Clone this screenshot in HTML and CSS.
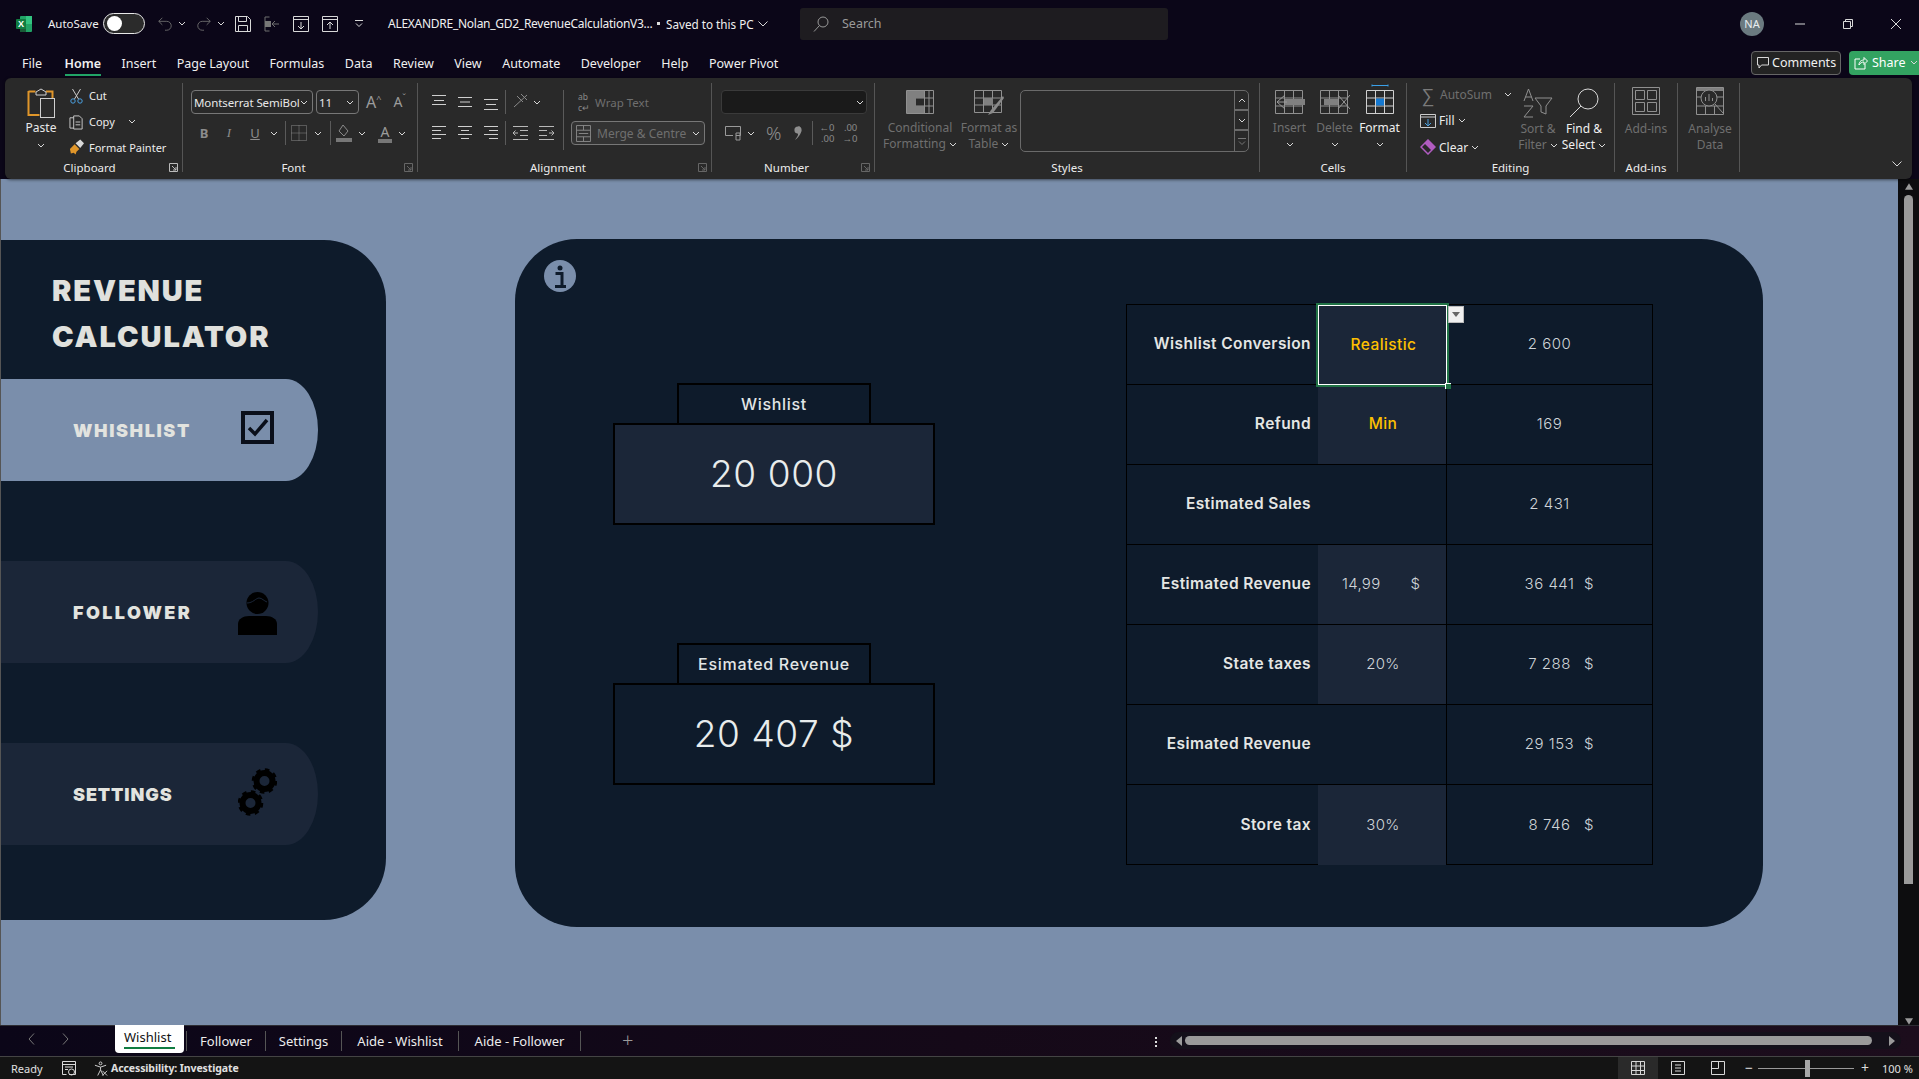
FILE: index.html
```html
<!DOCTYPE html>
<html lang="en">
<head>
<meta charset="utf-8">
<title>Revenue Calculator</title>
<link rel="stylesheet" href="styles.css">
</head>
<body>
<div class="window">
  <header class="titlebar">
    <svg class="logo" viewBox="0 0 16 16"><rect x="4" y="0" width="12" height="16" rx="1" fill="#21a366"/><rect x="10" y="0" width="6" height="8" fill="#33c481"/><rect x="4" y="8" width="6" height="8" fill="#185c37"/><rect x="0" y="3" width="10" height="10" rx="1" fill="#107c41"/><text x="5" y="11" class="logo-x">X</text></svg>
    <span class="autosave">AutoSave</span>
    <span class="toggle"><span class="knob"></span></span>
    <svg class="qa q-undo dim" viewBox="0 0 16 18"><path d="M1 6h9a5 5 0 0 1 0 10H8M1 6l4-4M1 6l4 4"/></svg>
    <svg class="chev q-c1 dimc" viewBox="0 0 8 5"><path d="M1 1l3 3 3-3"/></svg>
    <svg class="qa q-redo dim" viewBox="0 0 16 18"><path d="M15 6H6a5 5 0 0 0 0 10h2M15 6l-4-4M15 6l-4 4"/></svg>
    <svg class="chev q-c1 dimc" viewBox="0 0 8 5"><path d="M1 1l3 3 3-3"/></svg>
    <svg class="qa q-save" viewBox="0 0 16 16"><path d="M.5.500h12l3 3v12H.5zM3.500.5v5h8v-5M3.500 15.500v-6h9v6"/></svg>
    <svg class="qa q-imp dim" viewBox="0 0 16 16"><path d="M5.500 1H1v14h4.500M15 8H8M11 5L8 8l3 3"/><rect x="1" y="5" width="6" height="6" fill="#777" stroke="none"/></svg>
    <svg class="qa q-box" viewBox="0 0 16 16"><path d="M.5.500h15v15H.5zM.5 3.500h15M8 6v7M5 10l3 3 3-3"/></svg>
    <svg class="qa q-box2" viewBox="0 0 16 16"><path d="M.5.500h15v15H.5zM.5 3.500h15M8 13V6M5 9l3-3 3 3"/></svg>
    <svg class="q-cust" viewBox="0 0 8 7"><path d="M0 .5h8M1 3.500l3 3 3-3"/></svg>
    <span class="doc">ALEXANDRE_Nolan_GD2_RevenueCalculationV3...</span>
    <span class="dot"></span>
    <span class="saved">Saved to this PC</span>
    <svg class="doc-chev" viewBox="0 0 10 6"><path d="M.5.500L5 5 9.500.5"/></svg>
    <div class="search">
      <svg class="search-ic" viewBox="0 0 16 16"><circle cx="10" cy="6" r="5"/><path d="M6.500 9.500L1 15.500"/></svg>
      <span>Search</span>
    </div>
    <span class="avatar">NA</span>
    <svg class="win win-min" viewBox="0 0 10 10"><path d="M0 5h10"/></svg>
    <svg class="win win-max" viewBox="0 0 10 10"><path d="M.5 2.500h7v7h-7zM2.500 2.500v-2h7v7h-2"/></svg>
    <svg class="win win-close" viewBox="0 0 10 10"><path d="M0 0l10 10M10 0L0 10"/></svg>
  </header>

  <nav class="tabsrow">
    <span class="tab-file">File</span><span class="tab-on">Home</span><span>Insert</span><span>Page Layout</span><span>Formulas</span><span>Data</span><span>Review</span><span>View</span><span>Automate</span><span>Developer</span><span>Help</span><span>Power Pivot</span>
    <div class="actions">
      <span class="comments"><svg class="cm-ic" viewBox="0 0 12 12"><path d="M.5.500h11v7.500H4.500L2 11V8H.5z"/></svg>Comments</span>
      <span class="share"><svg class="sh-ic" viewBox="0 0 14 14"><path d="M6 3H1v10h10V8M5 9c0-4 3-5 5-5V1.500L13.500 5 10 8.500V6C8 6 6 7 5 9z"/></svg>Share<svg class="chev sh-c" viewBox="0 0 8 5"><path d="M1 1l3 3 3-3"/></svg></span>
    </div>
  </nav>

  <section class="ribbon">
    <div class="grp g-clip">
      <div class="body clipbody">
        <div class="paste">
          <svg class="paste-ic" viewBox="0 0 28 30"><path d="M1.500 3.500h7M19 3.500h6.500V10M1.500 3v24h11" fill="none" stroke="#e0962a" stroke-width="2"/><path d="M9 4l5-3 5 3v3H9z" fill="none" stroke="#cfcfcf"/><rect x="13.500" y="10.500" width="14" height="19" fill="#2a2a2a" stroke="#cfcfcf"/></svg>
          <span class="txt">Paste</span>
          <svg class="chev" viewBox="0 0 8 5"><path d="M1 1l3 3 3-3"/></svg>
        </div>
        <div class="clipcol">
          <div class="crow"><svg class="cic" viewBox="0 0 14 16"><path d="M3 1l6 10M11 1L5 11" stroke="#ccc" fill="none"/><circle cx="3.500" cy="13" r="2.200" fill="none" stroke="#4aa0e0"/><circle cx="10.500" cy="13" r="2.200" fill="none" stroke="#4aa0e0"/></svg><span>Cut</span></div>
          <div class="crow"><svg class="cic" viewBox="0 0 16 16"><path d="M5 3.500H1v11h4M5 1.500h6l3 3v11H5zM7 8h5M7 11h5" stroke="#ccc" fill="none"/></svg><span>Copy</span><svg class="chev copy-c" viewBox="0 0 8 5"><path d="M1 1l3 3 3-3"/></svg></div>
          <div class="crow"><svg class="cic" viewBox="0 0 16 16"><path d="M1 10l5-5 5 5-3 3-1 3-2-2-3 1z" fill="#e0962a"/><path d="M7 4l5-4 4 4-4 5z" fill="#d8d8d8"/></svg><span>Format Painter</span></div>
        </div>
      </div>
      <div class="glabel lab-clip">Clipboard</div>
      <svg class="launch" viewBox="0 0 9 9"><path d="M.5 8.500v-8h8v8zM3 3l4 4M7 4v3H4"/></svg>
    </div>

    <div class="grp g-font">
      <div class="body rows">
        <div class="row">
          <span class="combo font-combo"><span>Montserrat SemiBol</span><svg class="chev" viewBox="0 0 8 5"><path d="M1 1l3 3 3-3"/></svg></span>
          <span class="combo size-combo"><span>11</span><svg class="chev" viewBox="0 0 8 5"><path d="M1 1l3 3 3-3"/></svg></span>
          <span class="glyph big-a">A<sup>^</sup></span>
          <span class="glyph small-a">A<sup>ˇ</sup></span>
        </div>
        <div class="row">
          <span class="fx f-b">B</span>
          <span class="fx f-i">I</span>
          <span class="fx f-u">U</span>
          <svg class="chev f-c dimc" viewBox="0 0 8 5"><path d="M1 1l3 3 3-3"/></svg>
          <i class="vsep vs-1"></i>
          <svg class="ric" viewBox="0 0 16 16"><path d="M.5.500h15v15H.5zM8 .5v15M.5 8h15" stroke-dasharray="1 1"/></svg>
          <svg class="chev f-c2 dimc" viewBox="0 0 8 5"><path d="M1 1l3 3 3-3"/></svg>
          <i class="vsep vs-2"></i>
          <svg class="ric fill-ic" viewBox="0 0 16 18"><path d="M7 1l5 6-4 5-5-5z"/><rect y="14" width="16" height="4" fill="#777" stroke="none"/></svg>
          <svg class="chev f-c3 dimc" viewBox="0 0 8 5"><path d="M1 1l3 3 3-3"/></svg>
          <span class="color-a">A</span>
          <svg class="chev f-c3 dimc" viewBox="0 0 8 5"><path d="M1 1l3 3 3-3"/></svg>
        </div>
      </div>
      <div class="glabel lab-launch">Font</div>
      <svg class="launch dimlaunch" viewBox="0 0 9 9"><path d="M.5 8.500v-8h8v8zM3 3l4 4M7 4v3H4"/></svg>
    </div>

    <div class="grp g-align">
      <div class="body alignbody">
        <div class="rows align-l">
          <div class="row">
            <svg class="al" viewBox="0 0 14 16"><path d="M0 1.500h14M2 6.500h10M0 10.500h14"/></svg>
            <svg class="al al-g" viewBox="0 0 14 16"><path d="M0 3.500h14M2 8h10M0 12.500h14"/></svg>
            <svg class="al al-g" viewBox="0 0 14 16"><path d="M0 5.500h14M2 10.500h10M0 15.500h14"/></svg>
            <i class="vsep vs-a"></i>
            <svg class="ric orient" viewBox="0 0 16 18"><path d="M1 14L14 2M4 3l6 6M8 1l6 6"/></svg>
            <svg class="chev or-c dimc" viewBox="0 0 8 5"><path d="M1 1l3 3 3-3"/></svg>
          </div>
          <div class="row">
            <svg class="al" viewBox="0 0 14 16"><path d="M0 1.500h14M0 5.500h9M0 9.500h14M0 13.500h9"/></svg>
            <svg class="al al-g" viewBox="0 0 14 16"><path d="M0 1.500h14M3 5.500h8M0 9.500h14M3 13.500h8"/></svg>
            <svg class="al al-g" viewBox="0 0 14 16"><path d="M0 1.500h14M5 5.500h9M0 9.500h14M5 13.500h9"/></svg>
            <i class="vsep vs-a"></i>
            <svg class="ind" viewBox="0 0 15 16"><path d="M0 1.500h15M0 14.500h15M7 5.500h8M7 10.500h8M5 8H0M2.500 5.500L0 8l2.500 2.500" /></svg>
            <svg class="ind ind2" viewBox="0 0 15 16"><path d="M0 1.500h15M0 14.500h15M0 5.500h8M0 10.500h8M10 8h5M12.500 5.500L15 8l-2.500 2.500"/></svg>
          </div>
        </div>
        <i class="vsep vs-wrap"></i>
        <div class="rows align-r">
          <div class="row wrap">
            <span class="wrapab">ab<br>c↵</span><span>Wrap Text</span>
          </div>
          <div class="row">
            <span class="merge"><svg class="merge-ic" viewBox="0 0 16 18"><path d="M.5.500h15v17H.5zM.5 5.500h15M.5 12.500h15M8 .5v5M8 12.500v5M3 9h10"/></svg><span>Merge &amp; Centre</span><svg class="chev merge-c" viewBox="0 0 8 5"><path d="M1 1l3 3 3-3"/></svg></span>
          </div>
        </div>
      </div>
      <div class="glabel lab-launch">Alignment</div>
      <svg class="launch dimlaunch" viewBox="0 0 9 9"><path d="M.5 8.500v-8h8v8zM3 3l4 4M7 4v3H4"/></svg>
    </div>

    <div class="grp g-num">
      <div class="body rows">
        <div class="row"><span class="numcombo"><svg class="chev dimc" viewBox="0 0 8 5"><path d="M1 1l3 3 3-3"/></svg></span></div>
        <div class="row">
          <svg class="ric num-ic" viewBox="0 0 16 16"><path d="M.5 1.500h15v9H11M.5 1.500v9H8M11 8h4v7h-4z"/></svg>
          <svg class="chev n-c" viewBox="0 0 8 5"><path d="M1 1l3 3 3-3"/></svg>
          <span class="pct">%</span>
          <svg class="comma" viewBox="0 0 8 15"><circle cx="4" cy="4" r="3.600"/><path d="M4.500 0C8 1 8 7 5 10c-1 1-2 3-4 4 1-2 2.500-3 3-5 .2-1-.5-2-.5-2z"/></svg>
          <i class="vsep vs-n"></i>
          <span class="dec">←0<br>.00</span>
          <span class="dec dec2">.00<br>→0</span>
        </div>
      </div>
      <div class="glabel lab-launch">Number</div>
      <svg class="launch dimlaunch" viewBox="0 0 9 9"><path d="M.5 8.500v-8h8v8zM3 3l4 4M7 4v3H4"/></svg>
    </div>

    <div class="grp g-styles">
      <div class="body stylesbody">
        <div class="big big-cf">
          <svg class="bigic" viewBox="0 0 28 24"><path d="M.5.500h27v23H.5zM.5 8h27M.5 16h27M9.500.5v23M18.500.5v23M23 .5v23"/><path d="M1 1h17v7H10v8h8v7H1z" fill="#808080" stroke="none"/></svg>
          <span>Conditional</span><span>Formatting <svg class="chev inl dimc" viewBox="0 0 8 5"><path d="M1 1l3 3 3-3"/></svg></span>
        </div>
        <div class="big big-ft">
          <svg class="bigic" viewBox="0 0 30 26"><path d="M.5.500h27v22H.5zM.5 8h27M.5 15h27M9.500.5v22M18.500.5v22"/><path d="M10 8h9v7h-9z" fill="#808080" stroke="none"/><path d="M29 6L17 20l-3 5 5-2L30 8z" fill="#8a8a8a" stroke="none"/></svg>
          <span>Format as</span><span>Table <svg class="chev inl dimc" viewBox="0 0 8 5"><path d="M1 1l3 3 3-3"/></svg></span>
        </div>
        <div class="gallery">
          <div class="gal-main"></div>
          <div class="gal-side">
            <span><svg class="chev dimc" viewBox="0 0 8 5"><path d="M1 4l3-3 3 3"/></svg></span>
            <span><svg class="chev dimc" viewBox="0 0 8 5"><path d="M1 1l3 3 3-3"/></svg></span>
            <span><svg class="q-gal" viewBox="0 0 8 7"><path d="M0 .5h8M1 3.500l3 3 3-3"/></svg></span>
          </div>
        </div>
      </div>
      <div class="glabel">Styles</div>
    </div>

    <div class="grp g-cells">
      <div class="body cellsbody">
        <div class="big big-cell">
          <svg class="bigic" viewBox="0 0 30 24"><path d="M.5.500h27v23H.5zM.5 8h27M.5 16h27M9.500.5v23M18.500.5v23"/><path d="M10 9h20v6H10z" fill="#808080" stroke="none"/><path d="M10 5l-8 7 8 7M2 12h10" stroke="#999"/></svg>
          <span>Insert</span><svg class="chev dimc" viewBox="0 0 8 5"><path d="M1 1l3 3 3-3"/></svg>
        </div>
        <div class="big big-cell">
          <svg class="bigic" viewBox="0 0 30 24"><path d="M.5.500h27v23H.5zM.5 8h27M.5 16h27M9.500.5v23M18.500.5v23"/><path d="M4 9h14v6H4z" fill="#808080" stroke="none"/><path d="M18 5l12 14M30 5L18 19" stroke="#999"/></svg>
          <span>Delete</span><svg class="chev dimc" viewBox="0 0 8 5"><path d="M1 1l3 3 3-3"/></svg>
        </div>
        <div class="big big-cell on">
          <svg class="bigic fmt-ic" viewBox="0 0 28 30"><path d="M6 1.500h16M6 .5v2M22 .5v2" stroke="#3aa0e8"/><path d="M.5 6.500h27v23H.5zM.5 14h27M.5 22h27M9.500 6.500v23M18.500 6.500v23" stroke="#d0d0d0"/><path d="M10 14.500h8v7h-8z" fill="#1478d0" stroke="none"/></svg>
          <span>Format</span><svg class="chev" viewBox="0 0 8 5"><path d="M1 1l3 3 3-3"/></svg>
        </div>
      </div>
      <div class="glabel">Cells</div>
    </div>

    <div class="grp g-edit">
      <div class="body editbody">
        <div class="editcol">
          <div class="erow off"><span class="sigma">∑</span><span>AutoSum</span><svg class="chev auto-c" viewBox="0 0 8 5"><path d="M1 1l3 3 3-3"/></svg></div>
          <div class="erow"><svg class="eic" viewBox="0 0 16 14"><path d="M.5.500h15v13H.5zM.5 3h15" fill="none" stroke="#ccc"/><path d="M8 5v7M5 9l3 3 3-3" fill="none" stroke="#4aa0e0"/></svg><span>Fill</span><svg class="chev" viewBox="0 0 8 5"><path d="M1 1l3 3 3-3"/></svg></div>
          <div class="erow"><svg class="eic" viewBox="0 0 16 16"><path d="M8 1l7 7-7 7-7-7z" fill="none" stroke="#b05cc0" stroke-width="1.500"/><path d="M4.500 4.500L8 1l7 7-3.500 3.500z" fill="#b05cc0"/></svg><span>Clear</span><svg class="chev" viewBox="0 0 8 5"><path d="M1 1l3 3 3-3"/></svg></div>
        </div>
        <div class="big big-sort">
          <svg class="bigic sort-ic" viewBox="0 0 30 30"><path d="M1 13L5.500 1 10 13M2.500 9h6M1 18h9L1 29h9M12 10h17l-6 8v8l-5-2v-6z"/></svg>
          <span>Sort &amp;</span><span>Filter <svg class="chev inl dimc" viewBox="0 0 8 5"><path d="M1 1l3 3 3-3"/></svg></span>
        </div>
        <div class="big big-find on">
          <svg class="bigic find-ic" viewBox="0 0 30 30"><circle cx="19" cy="11" r="10"/><path d="M12 18L1 29"/></svg>
          <span>Find &amp;</span><span>Select <svg class="chev inl" viewBox="0 0 8 5"><path d="M1 1l3 3 3-3"/></svg></span>
        </div>
      </div>
      <div class="glabel">Editing</div>
    </div>

    <div class="grp g-add">
      <div class="body cellsbody">
        <div class="big big-add">
          <svg class="bigic add-ic" viewBox="0 0 28 28"><path d="M.5.500h27v27H.5zM3.500 3.500h9v9h-9zM15.500 3.500h9v9h-9zM3.500 15.500h9v9h-9zM15.500 15.500h9v9h-9z"/></svg>
          <span>Add-ins</span>
        </div>
      </div>
      <div class="glabel">Add-ins</div>
    </div>

    <div class="grp g-data">
      <div class="body cellsbody">
        <div class="big big-add big-an">
          <svg class="bigic add-ic" viewBox="0 0 28 28"><path d="M.5.500h27v27H.5zM.5 10h27M.5 19h27M9.500 19v8M18.500 19v8"/><path d="M1 1h26v3H1z" fill="#808080" stroke="none"/><circle cx="13" cy="11" r="8" fill="#2a2a2a"/><path d="M19 17l8 9M9.500 14V10M13 14V7M16.500 14v-3"/></svg>
          <span>Analyse</span><span>Data</span>
        </div>
      </div>
      <div class="glabel hidden">.</div>
    </div>
    <svg class="collapse" viewBox="0 0 10 6"><path d="M.5.500L5 5 9.500.5"/></svg>
  </section>

  <main class="sheetwrap">
    <div class="sheet">
      <aside class="side">
        <h1 class="side-title">REVENUE<br>CALCULATOR</h1>
        <a class="navbtn nav-on"><span class="t-wish">WHISHLIST</span>
          <svg class="nav-ic" viewBox="0 0 33 33"><rect x="2" y="2" width="29" height="29" fill="none" stroke="#0a0f1a" stroke-width="4"/><path d="M8 17l6 6L26 9" fill="none" stroke="#0a0f1a" stroke-width="3.500"/></svg>
        </a>
        <a class="navbtn"><span class="t-foll">FOLLOWER</span>
          <svg class="nav-ic user-ic" viewBox="0 0 39 43"><circle cx="19.500" cy="11" r="11"/><path d="M0 43V32c0-5 5-8 11-8h17c6 0 11 3 11 8v11z"/><path d="M9 11c6 0 9-5 12-5s5 3 8 4" fill="none" stroke="#1b2638" stroke-width="1"/></svg>
        </a>
        <a class="navbtn"><span class="t-set">SETTINGS</span>
          <svg class="nav-ic gear-ic" viewBox="0 0 39 48"><g fill="none" stroke="#000"><circle cx="26.500" cy="13" r="8" stroke-width="6"/><circle cx="26.500" cy="13" r="11.300" stroke-width="3" stroke-dasharray="4.500 4.380"/><circle cx="12.500" cy="35" r="8" stroke-width="6"/><circle cx="12.500" cy="35" r="11.300" stroke-width="3" stroke-dasharray="4.500 4.380"/></g></svg>
        </a>
      </aside>

      <section class="panel">
        <svg class="info" viewBox="0 0 32 32"><circle cx="16" cy="16" r="16" fill="#7a8eab"/><circle cx="16" cy="8" r="2.500" fill="#0e1b2b"/><path d="M11.500 13.500h6.500v12M11 26.500h11" fill="none" stroke="#0e1b2b" stroke-width="3"/></svg>
        <div class="kpis">
          <div class="kpi">
            <div class="kpi-label">Wishlist</div>
            <div class="kpi-val filled">20 000</div>
          </div>
          <div class="kpi">
            <div class="kpi-label">Esimated Revenue</div>
            <div class="kpi-val">20 407 $</div>
          </div>
        </div>
        <div class="tbl">
          <div class="lab">Wishlist Conversion</div>
          <div class="inp sel yel">Realistic<span class="handle"></span><span class="dd"><svg viewBox="0 0 8 5"><path d="M0 0h8L4 5z"/></svg></span></div>
          <div class="val"><span class="n">2 600</span></div>

          <div class="lab">Refund</div>
          <div class="inp yel">Min</div>
          <div class="val"><span class="n">169</span></div>

          <div class="lab">Estimated Sales</div>
          <div class="blank"></div>
          <div class="val"><span class="n">2 431</span></div>

          <div class="lab">Estimated Revenue</div>
          <div class="inp price"><span>14,99</span><span>$</span></div>
          <div class="val"><span class="n">36 441</span><span class="usd">$</span></div>

          <div class="lab">State taxes</div>
          <div class="inp">20%</div>
          <div class="val"><span class="n">7 288</span><span class="usd">$</span></div>

          <div class="lab">Esimated Revenue</div>
          <div class="blank"></div>
          <div class="val"><span class="n">29 153</span><span class="usd">$</span></div>

          <div class="lab">Store tax</div>
          <div class="inp">30%</div>
          <div class="val"><span class="n">8 746</span><span class="usd">$</span></div>
        </div>
      </section>
    </div>
    <div class="vscroll">
      <svg class="arr" viewBox="0 0 10 8"><path d="M5 0l5 8H0z"/></svg>
      <div class="vthumb"></div>
      <svg class="arr" viewBox="0 0 10 8"><path d="M0 0h10L5 8z"/></svg>
    </div>
  </main>

  <footer class="sheetbar">
    <div class="sheetnav">
      <svg class="sn" viewBox="0 0 7 12"><path d="M6 .5L1 6l5 5.500"/></svg>
      <svg class="sn sn2" viewBox="0 0 7 12"><path d="M1 .5L6 6l-5 5.500"/></svg>
    </div>
    <span class="stab active">Wishlist</span>
    <span class="stab st-f">Follower</span>
    <span class="stab st-s">Settings</span>
    <span class="stab st-aw">Aide - Wishlist</span>
    <span class="stab st-af">Aide - Follower</span>
    <span class="plus">+</span>
    <span class="kebab"><i></i><i></i><i></i></span>
    <div class="htrack">
      <svg class="harr" viewBox="0 0 6 10"><path d="M6 0v10L0 5z"/></svg>
      <div class="hthumb"></div>
      <svg class="harr" viewBox="0 0 6 10"><path d="M0 0v10l6-5z"/></svg>
    </div>
  </footer>

  <footer class="status">
    <span class="ready">Ready</span>
    <svg class="st-ic macro" viewBox="0 0 14 15"><path d="M.5.500h13v13H7M.5.500v13h4M.5 3.500h13M3 6h8M3 8.500h3"/><circle cx="9.500" cy="11" r="3"/></svg>
    <svg class="st-ic acc" viewBox="0 0 15 15"><circle cx="7" cy="2" r="1.500"/><path d="M1 4l6 2 6-2M7 6v3M4 15l3-6 3 6M9 10l5 5M14 10l-5 5"/></svg>
    <span class="acc-t">Accessibility: Investigate</span>
    <div class="st-right">
      <span class="vw vw-on"><svg class="st-ic" viewBox="0 0 14 14"><path d="M.5.500h13v13H.5zM.5 5h13M.5 9.500h13M5 .5v13M9.500.5v13"/></svg></span>
      <span class="vw"><svg class="st-ic" viewBox="0 0 14 14"><path d="M.5.500h13v13H.5zM4 4h6M4 7h6M4 10h6"/></svg></span>
      <span class="vw"><svg class="st-ic" viewBox="0 0 14 14"><path d="M.5.500h13v13H.5zM7.500.5v7h-7"/></svg></span>
      <span class="zm zm-m">−</span>
      <span class="slider"><i></i></span>
      <span class="zm">+</span>
      <span class="zoom">100 %</span>
    </div>
  </footer>
</div>
</body>
</html>
```

FILE: styles.css
```css
*{box-sizing:border-box;margin:0;padding:0}
html,body{width:1919px;height:1079px;overflow:hidden;background:#0b0618}
body{font-family:"Noto Sans","Open Sans",sans-serif;font-size:12px;color:#e8e8e8}
svg{display:block;flex:none;fill:none;stroke:#d8d8d8;stroke-width:1}
.window{width:1919px;height:1079px;display:flex;flex-direction:column}

/* title bar */
.titlebar{height:47px;display:flex;align-items:center;padding-left:16px;color:#f0f0f0}
.logo{width:16px;height:16px;stroke:none}
.logo-x{font:700 9px "Liberation Sans",sans-serif;fill:#fff;stroke:none;text-anchor:middle}
.autosave{margin-left:16px;width:49px;font-size:11.500px;white-space:nowrap}
.toggle{margin-left:6px;width:42px;height:21px;border:1px solid #e8e8e8;border-radius:11px;background:#2b2b2b;padding:2px 0 0 3px}
.knob{display:block;width:15px;height:15px;border-radius:50%;background:#fff}
.qa{width:16px;height:16px}
.dim{stroke:#6f6f6f}
.dimc{stroke:#777}
.q-undo{margin-left:12px}
.q-c1{margin-left:5px;width:8px;height:5px}
.q-redo{margin-left:10px}
.q-save{margin-left:10px}
.q-imp{margin-left:13px}
.q-box{margin-left:13px}
.q-box2{margin-left:13px}
.q-cust{margin-left:17px;width:8px;height:7px}
.doc{margin-left:25px;width:262px;font-size:12px;white-space:nowrap;letter-spacing:-.27px}
.dot{margin-left:7px;width:3px;height:3px;background:#ddd}
.saved{margin-left:6px;width:90px;white-space:nowrap;font-size:11.700px}
.doc-chev{margin-left:2px;width:10px;height:6px}
.search{margin-left:32px;width:368px;height:32px;background:#1e1c20;border-radius:3px;display:flex;align-items:center;padding-left:13px;color:#9a9a9a}
.search-ic{width:16px;height:16px;stroke:#999}
.search span{margin-left:13px;font-size:12.500px}
.avatar{margin-left:572px;width:24px;height:24px;border-radius:50%;background:#6b7a80;color:#e8eef0;font-size:11px;text-align:center;line-height:24px}
.win{width:10px;height:10px}
.win-min{margin-left:31px}
.win-max{margin-left:38px}
.win-close{margin-left:38px}

/* tabs */
.tabsrow{height:31px;display:flex;align-items:center;gap:20.500px;padding-left:22px;font-size:12.500px;color:#f0f0f0;white-space:nowrap}
.tabsrow>span{padding-top:2px}
.tab-file{margin-right:2px}
.tab-on{font-weight:600;position:relative;height:31px;line-height:30px}
.tab-on::after{content:"";position:absolute;left:0;right:0;bottom:2px;height:2px;background:#21a366}
.actions{margin-left:auto;display:flex;gap:8px}
.comments{width:90px;height:24px;border:1px solid #666;border-radius:4px;background:#232323;display:flex;align-items:center;padding-left:5px;font-size:12.500px;gap:3px}
.cm-ic{width:12px;height:12px}
.share{width:70px;height:24px;background:#33a361;border-radius:4px 0 0 4px;display:flex;align-items:center;padding-left:5px;gap:4px;font-size:12.500px;color:#fff}
.sh-ic{width:14px;height:14px;stroke:#fff}
.sh-c{stroke:#fff}

/* ribbon */
.ribbon{position:relative;margin-left:5px;width:1907px;height:101px;background:#292929;border-radius:6px;padding:5px 0 7px;display:flex;box-shadow:0 1px 3px rgba(0,0,0,.5)}
.grp{position:relative;display:flex;flex-direction:column;border-right:1px solid #555}
.g-clip{width:178px}.g-font{width:235px}.g-align{width:294px}.g-num{width:163px}.g-styles{width:385px}.g-cells{width:147px}.g-edit{width:208px}.g-add{width:63px}.g-data{width:62px}
.body{flex:1;min-height:0}
.glabel{height:16px;line-height:16px;text-align:center;font-size:11.500px;color:#ececec;margin-bottom:-4px;white-space:nowrap}
.lab-clip{padding-right:8px}
.lab-launch{padding-right:13px}
.hidden{visibility:hidden}
.launch{position:absolute;right:4px;bottom:0;width:9px;height:9px;stroke:#bbb}
.dimlaunch{stroke:#666}
.chev{width:8px;height:5px;stroke:#d8d8d8}
.inl{display:inline-block;vertical-align:middle}
.txt{font-size:12px}

.clipbody{display:flex;padding-left:17px}
.paste{width:38px;display:flex;flex-direction:column;align-items:center}
.paste-ic{width:28px;height:30px;margin-top:5px;stroke:none}
.paste .txt{margin-top:2px;line-height:16px;font-size:12px}
.paste .chev{margin-top:7px}
.clipcol{margin-left:9px;display:flex;flex-direction:column}
.crow{height:26px;display:flex;align-items:center;gap:5px;font-size:11px;white-space:nowrap;color:#ececec}
.cic{width:15px;height:16px;stroke:none}
.copy-c{margin-left:8px}

.rows{padding-top:7px;display:flex;flex-direction:column;gap:7px}
.row{height:24px;display:flex;align-items:center}
.g-font .rows{padding-left:8px}
.combo{height:24px;border:1px solid #777;border-radius:4px;display:flex;align-items:center;justify-content:space-between;padding:0 4px 0 2px;font-size:11.500px;white-space:nowrap}
.font-combo{width:122px;letter-spacing:-.1px}
.size-combo{width:43px;margin-left:3px}
.glyph{font-size:16px;color:#9c9c9c;font-weight:400;line-height:1}
.glyph sup{font-size:9px;vertical-align:6px;line-height:0}
.big-a{margin-left:7px}
.small-a{margin-left:12px;font-size:14px}
.fx{color:#8c8c8c;font-size:13px;width:12px;text-align:center;font-family:"Liberation Serif","Noto Sans",serif}
.f-b{margin-left:7px;font-weight:700;font-family:"Noto Sans",sans-serif}
.f-i{margin-left:13px;font-style:italic}
.f-u{margin-left:14px;text-decoration:underline;font-family:"Noto Sans",sans-serif}
.f-c{margin-left:9px}
.vsep{display:block;flex:none;width:1px;background:#5a5a5a;height:24px}
.vs-1{margin-left:7px}
.ric{width:16px;height:16px;stroke:#8a8a8a}
.vs-1 + .ric{margin-left:5px}
.f-c2{margin-left:7px}
.vs-2{margin-left:8px}
.fill-ic{margin-left:5px;height:18px}
.f-c3{margin-left:6px}
.color-a{margin-left:12px;width:14px;text-align:center;color:#9c9c9c;font-size:14px;line-height:15px;border-bottom:4px solid #777}

.alignbody{display:flex}
.align-l{padding-left:14px;width:151px}
.al{width:14px;height:16px;stroke:#cfcfcf}
.al-g{margin-left:12px}
.vs-a{margin-left:7px}
.orient{margin-left:7px;height:18px}
.or-c{margin-left:4px}
.ind{width:15px;height:16px;stroke:#b8b8b8;margin-left:7px}
.ind2{margin-left:11px}
.vs-wrap{height:60px;margin:7px 0 0 -6px}
.align-r{padding-left:7px}
.wrap{color:#6f6f6f;font-size:11.500px;gap:5px;padding-left:7px}
.wrapab{font-size:8.500px;line-height:11px;color:#8a8a8a}
.merge{width:134px;height:24px;border:1px solid #777;border-radius:4px;background:#333;color:#6f6f6f;display:flex;align-items:center;padding-left:4px;gap:6px;font-size:12px;white-space:nowrap}
.merge-ic{width:15px;height:17px;stroke:#8a8a8a}
.merge-c{margin-left:auto;margin-right:5px}

.g-num .rows{padding-left:9px}
.numcombo{width:146px;height:24px;background:#1a1a1a;border:1px solid #3a3a3a;border-radius:4px;display:flex;align-items:center;justify-content:flex-end;padding-right:2px}
.num-ic{margin-left:4px;stroke:#9a9a9a}
.n-c{margin-left:6px}
.pct{margin-left:11px;font-size:19px;line-height:1;color:#8e8e8e;font-weight:300}
.comma{margin-left:13px;width:8px;height:15px;fill:#8e8e8e;stroke:none}
.vs-n{margin-left:10px}
.dec{margin-left:6px;font-size:9.500px;line-height:11px;color:#8a8a8a;text-align:right;white-space:nowrap}
.dec2{margin-left:8px}

.big{display:flex;flex-direction:column;align-items:center;font-size:12px;line-height:16px;color:#6f6f6f;white-space:nowrap}
.big.on{color:#f0f0f0}
.bigic{margin:7px 0 6px;stroke:#909090}
.stylesbody{display:flex}
.big-cf{width:90px;margin-left:0}
.big-cf .bigic{width:28px;height:24px}
.big-ft{width:48px;margin-left:0}
.big-ft .bigic{width:30px;height:26px;margin-bottom:4px}
.gallery{margin-left:7px;margin-top:7px;width:229px;height:62px;border:1px solid #6a6a6a;border-radius:5px;display:flex}
.gal-main{flex:1}
.gal-side{width:14px;border-left:1px solid #6a6a6a;display:grid;grid-template-rows:repeat(3,1fr)}
.gal-side span{display:flex;align-items:center;justify-content:center;border-bottom:2px solid #6a6a6a}
.gal-side span:last-child{border-bottom:0}
.q-gal{width:8px;height:7px;stroke:#777}
.cellsbody{display:flex;padding-left:7px}
.big-cell{width:45px}
.big-cell .bigic{width:30px;height:24px}
.big-cell .chev{margin-top:6px}
.fmt-ic{width:28px !important;height:30px !important;margin:1px 0 6px !important}

.editbody{display:flex;padding-left:13px}
.editcol{width:94px;display:flex;flex-direction:column;padding-top:0}
.erow{height:26px;display:flex;align-items:center;gap:3px;font-size:12px;color:#ececec}
.erow:first-child{margin-top:-1px}
.erow:last-child{margin-top:1px}
.erow.off{color:#6f6f6f;gap:4px}
.sigma{font-size:18px;width:16px;text-align:center;color:#7a7a7a;line-height:1}
.auto-c{margin-left:8px}
.eic{width:16px;height:16px;stroke:none}
.big-sort{width:46px;margin-left:1px}
.big-find{width:46px}
.sort-ic{width:30px;height:30px;margin:5px 0 3px}
.find-ic{width:30px;height:30px;margin:5px 0 3px;stroke:#d8d8d8}
.g-add .cellsbody,.g-data .cellsbody{padding:0;justify-content:center}
.big-an{margin-left:3px}
.add-ic{width:28px;height:28px;margin:4px 0 6px}
.collapse{position:absolute;right:10px;bottom:12px;width:10px;height:6px}

/* sheet */
.sheetwrap{height:846px;display:flex}
.sheet{width:1898px;height:846px;background:#7a8eab;border-left:1px solid #555;display:flex;align-items:flex-start;overflow:hidden}
.side{margin-top:61px;width:385px;height:680px;background:#0e1b2b;border-radius:0 62px 62px 0;display:flex;flex-direction:column;color:#e0e1dd}
.side-title{margin:28px 0 0 51px;font:900 29px/46px Inter,sans-serif;letter-spacing:1.9px;color:#e0e1dd}
.navbtn{display:flex;align-items:center;justify-content:space-between;width:317px;height:102px;background:#1b2638;border-radius:0 32px 32px 0/0 51px 51px 0;padding-left:72px;padding-right:41px;font:900 18px Inter,sans-serif;color:#e2e3df;margin-bottom:80px;flex:none}
.nav-on{margin-top:19px;background:#7a8eab}
.t-wish{letter-spacing:1.6px}
.t-foll{letter-spacing:2.4px}
.t-set{letter-spacing:.9px}
.nav-ic{width:39px;height:33px}
.nav-on .nav-ic{width:33px;margin-right:3px;transform:translateY(-3px)}
.user-ic{height:43px;fill:#000;stroke:none;transform:translateY(1px)}
.gear-ic{height:48px;transform:translateY(-2px)}

.panel{position:relative;margin:60px 0 0 129px;width:1248px;height:688px;background:#0e1b2b;border-radius:62px;display:flex;padding-left:98px}
.info{position:absolute;left:29px;top:21px;width:32px;height:32px;stroke:none}
.kpis{width:322px;padding-top:144px;display:flex;flex-direction:column;gap:118px}
.kpi{display:flex;flex-direction:column;align-items:center}
.kpi-label{width:194px;height:40px;border:2px solid #000;border-bottom:0;display:flex;align-items:center;justify-content:center;font:500 16px Inter,sans-serif;color:#e2e6e6;letter-spacing:.7px}
.kpi-val{width:322px;height:102px;border:2px solid #000;display:flex;align-items:center;justify-content:center;font:300 37px Inter,sans-serif;color:#e8ecec;letter-spacing:.6px;padding-bottom:1px}
.filled{background:#1b2638}

.tbl{margin:65px 0 0 191px;width:527px;height:561px;border:1px solid #000;display:grid;grid-template-columns:191px 129px 205px;grid-auto-rows:80px;font-family:Inter,sans-serif;font-size:15px}
.lab,.inp,.blank,.val{border-bottom:1px solid #000;display:flex;align-items:center;padding-bottom:2px}
.tbl>:nth-last-child(-n+3){border-bottom:0}
.lab{justify-content:flex-end;padding-right:7px;font-weight:600;font-size:15.500px;letter-spacing:.4px;color:#e4e6e4}
.blank{border-right:1px solid #000}
.inp{position:relative;justify-content:center;background:#1b2638;border-right:1px solid #000;font-weight:300;color:#cfd4d8;letter-spacing:.3px;padding-left:2px}
.yel{color:#ffc000;font-weight:500;font-size:15.500px;letter-spacing:.4px}
.price{justify-content:flex-start;padding-left:24px;gap:30px}
.val{padding-left:68px;font-weight:300;color:#cfd4d8;letter-spacing:.5px}
.val .n{width:69px;text-align:center;white-space:nowrap}
.sel{outline:2px solid #217346;outline-offset:0;box-shadow:inset 0 0 0 1px #fff;border:0;z-index:2}
.handle{position:absolute;right:-4px;bottom:-4px;width:6px;height:6px;background:#217346;border:1px solid #fff;border-width:1px 0 0 1px;z-index:3}
.dd{position:absolute;left:calc(100% + 1px);top:1px;width:16px;height:17px;background:#f0f0f0;border:1px solid #bbb;display:flex;align-items:center;justify-content:center}
.dd svg{width:8px;height:5px;fill:#666;stroke:none}

.vscroll{flex:1;display:flex;flex-direction:column;align-items:center;background:#0d0d0f;padding:4px 0 0}
.arr{width:8px;height:7px;fill:#9a9a9a;stroke:none;flex:none}
.vthumb{width:9px;height:692px;margin:5px 0 134px;border-radius:5px 5px 0 0;background:#9a9a9a}

/* sheet tabs */
.sheetbar{height:32px;display:flex;align-items:flex-start;background:linear-gradient(90deg,#0b0618,#150918 50%,#1c0d1c);border-bottom:1px solid #444;font-size:13px;color:#ececec;position:relative;border-top:1px solid #2d2d33}
.sheetnav{width:115px;flex:none;padding:7px 0 0 28px;display:flex}
.sn{width:7px;height:12px;stroke:#777}
.sn2{margin-left:27px}
.stab{flex:none;height:20px;margin-top:5px;line-height:20px;text-align:center;border-right:1px solid #555;white-space:nowrap}
.st-f{width:80px;border-left:1px solid #555}
.st-s{width:76px}
.st-aw{width:117px}
.st-af{width:122px}
.stab.active{margin-top:-1px;height:28px;width:69px;padding:0 0 0 9px;background:#fff;color:#111;line-height:25px;text-align:left;border:0;border-radius:0 0 4px 4px;position:relative;margin-right:2px}
.stab.active::after{content:"";position:absolute;left:9px;right:9px;bottom:4px;height:2px;background:#107c41}
.plus{margin:2px 0 0 41px;font-size:20px;font-weight:300;line-height:24px;color:#9a9a9a}
.kebab{margin:11px 0 0 auto;display:flex;flex-direction:column;gap:2px}
.kebab i{display:block;width:2px;height:2px;background:#ddd}
.htrack{flex:none;margin:6px 18px 0 13px;width:731px;height:17px;border-radius:9px;background:#14101a;display:flex;align-items:center;padding:0 6px 0 6px}
.harr{width:6px;height:10px;fill:#9a9a9a;stroke:none}
.hthumb{flex:1;height:9px;margin:0 17px 0 3px;border-radius:5px;background:#9a9a9a}

/* status */
.status{height:22px;background:#141414;display:flex;align-items:center;padding-left:11px;font-size:11px;color:#e0e0e0}
.ready{width:38px}
.st-ic{width:14px;height:14px;stroke:#d8d8d8}
.macro{margin-left:13px;height:15px}
.acc{margin-left:18px;height:15px}
.acc-t{margin-left:3px;font-weight:700;font-size:10.500px;white-space:nowrap;letter-spacing:-.1px}
.st-right{margin-left:auto;display:flex;align-items:center;height:22px}
.vw{width:40px;height:22px;display:flex;align-items:center;justify-content:center}
.vw-on{background:#2a2a2a}
.zm{font-size:14px;line-height:1;color:#ddd}
.zm-m{margin-left:6.500px}
.slider{position:relative;display:block;width:96px;height:1px;background:#999;margin:0 7px 0 5px}
.slider i{position:absolute;left:47px;top:-8px;width:5px;height:17px;background:#a8a8a8}
.zoom{margin-left:13px;width:37px;font-size:11px;white-space:nowrap}
```
